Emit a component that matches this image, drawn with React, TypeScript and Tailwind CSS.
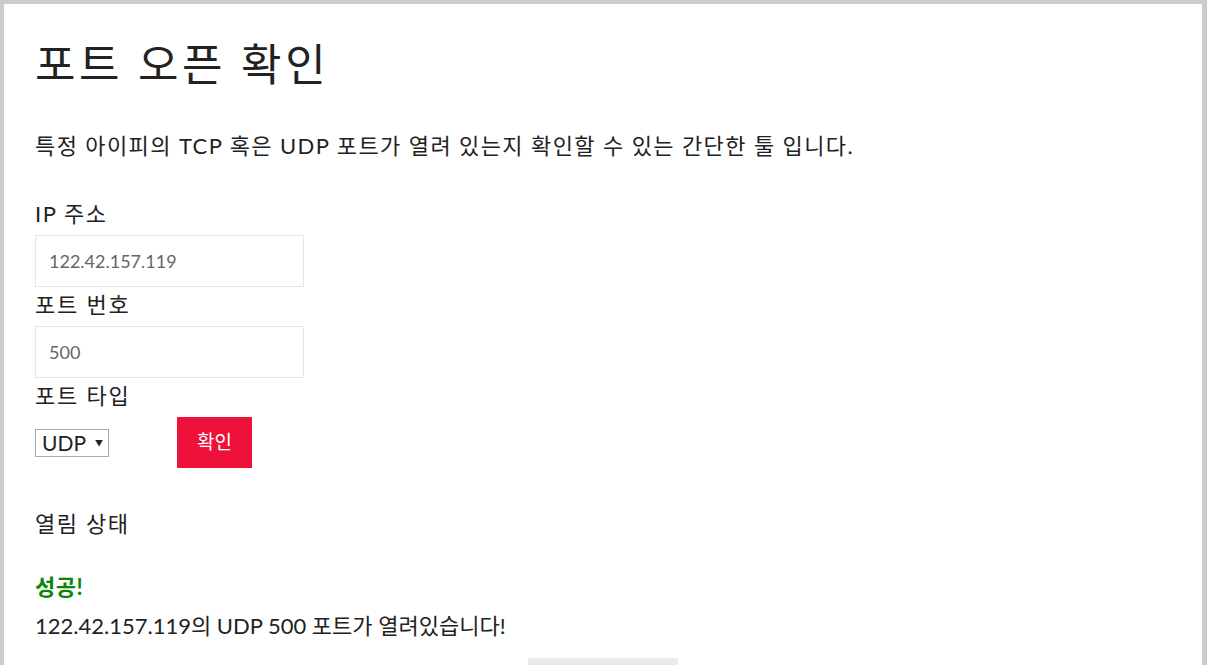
import React from "react";

const FONT = { fontFamily: '"Lato", "Noto Sans CJK KR", sans-serif' };

export default function App() {
  return (
    <div className="w-[1207px] h-[665px] overflow-hidden bg-white" style={FONT}>
      <div className="h-full border-t-4 border-l-4 border-r-[5px] border-[#cccccc] bg-white pl-[31px] pt-[34px] text-[#222222]">
        <h1 className="text-[44px] leading-[52px] font-normal tracking-[3.6px]">포트 오픈 확인</h1>
        <p className="mt-[41px] text-[22px] leading-[30px] tracking-[1.4px]">
          특정 아이피의 TCP 혹은 UDP 포트가 열려 있는지 확인할 수 있는 간단한 툴 입니다.
        </p>

        <div className="mt-[38px] text-[22px] leading-[30px] tracking-[1.5px]">IP 주소</div>
        <div className="mt-[6px] flex h-[52px] w-[269px] items-center border border-[#e6e6e6] pl-[13px] text-[18px] text-[#666666]">
          122.42.157.119
        </div>

        <div className="mt-[3px] text-[22px] leading-[30px] tracking-[1.8px]">포트 번호</div>
        <div className="mt-[6px] flex h-[52px] w-[269px] items-center border border-[#e6e6e6] pl-[13px] text-[18px] text-[#666666]">
          500
        </div>

        <div className="mt-[3px] text-[22px] leading-[30px] tracking-[1.8px]">포트 타입</div>
        <div className="mt-[6px] flex h-[51px] items-center">
          <div className="flex h-[28px] w-[74px] items-center border border-[#aaaaaa] pl-[6px] text-[21px] leading-none text-[#222222]">
            <span>UDP</span>
            <span className="ml-[9px] text-[8px]">▼</span>
          </div>
          <div className="ml-[68px] flex h-[51px] w-[75px] items-center justify-center bg-[#ee1139] text-[19px] text-white">
            확인
          </div>
        </div>

        <div className="mt-[41px] text-[22px] leading-[30px] tracking-[1.6px]">열림 상태</div>
        <div className="mt-[33px] text-[22px] font-bold leading-[30px] text-[#0a850a] tracking-[0.5px]">성공!</div>
        <div className="mt-[9px] text-[22px] leading-[30px]">
          122.42.157.119의 UDP 500 포트가 열려있습니다!
        </div>
        <div className="mt-[17px] flex w-[1136px] justify-center">
          <div className="h-[20px] w-[150px] bg-[#eaeaea]" />
        </div>
      </div>
    </div>
  );
}
